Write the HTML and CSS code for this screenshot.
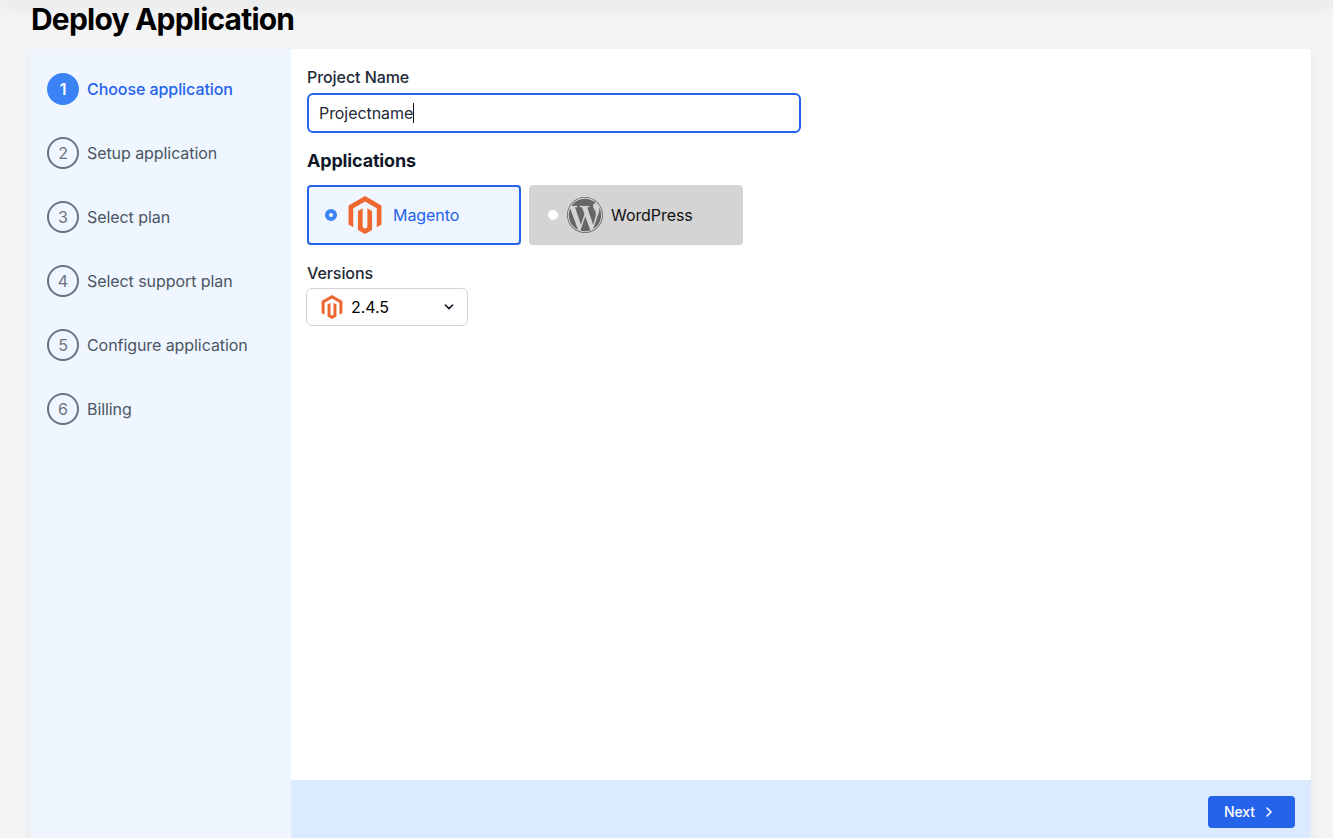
FILE: index.html
```html
<!DOCTYPE html>
<html lang="en">
<head>
<meta charset="utf-8">
<title>Deploy Application</title>
<link rel="stylesheet" href="styles.css">
</head>
<body>
<svg class="sprite" width="0" height="0" aria-hidden="true">
  <symbol id="magento" viewBox="0 0 24 24"><path d="M12 24l-4.455-2.572v-12l2.97-1.715v12.001l1.485.902 1.485-.902V7.713l2.97 1.715v12L12 24zM22.391 6v12l-2.969 1.714V7.713L12 3.43 4.574 7.713v12L1.609 18V6L12 0l10.391 6z"/></symbol>
  <symbol id="wordpress" viewBox="0 0 24 24"><path d="M21.469 6.825c.84 1.537 1.318 3.3 1.318 5.175 0 3.979-2.156 7.456-5.363 9.325l3.295-9.527c.615-1.54.82-2.771.82-3.864 0-.405-.026-.78-.07-1.11m-7.981.105c.647-.03 1.232-.105 1.232-.105.582-.075.514-.93-.067-.899 0 0-1.755.135-2.88.135-1.064 0-2.85-.15-2.85-.15-.585-.03-.661.855-.075.885 0 0 .54.061 1.125.09l1.68 4.605-2.37 7.08L5.354 6.9c.649-.03 1.234-.1 1.234-.1.585-.075.516-.93-.065-.896 0 0-1.746.138-2.874.138-.2 0-.438-.008-.69-.015C4.911 3.15 8.235 1.215 12 1.215c2.809 0 5.365 1.072 7.286 2.833-.046-.003-.091-.009-.141-.009-1.06 0-1.812.923-1.812 1.914 0 .89.513 1.643 1.06 2.531.411.72.89 1.643.89 2.977 0 .915-.354 1.994-.821 3.479l-1.075 3.585-3.9-11.61.001.014zM12 22.784c-1.059 0-2.081-.153-3.048-.437l3.237-9.406 3.315 9.087c.024.053.05.101.078.149-1.12.393-2.325.609-3.582.609M1.211 12c0-1.564.336-3.05.935-4.39L7.29 21.709C3.694 19.96 1.212 16.271 1.211 12M12 0C5.385 0 0 5.385 0 12s5.385 12 12 12 12-5.385 12-12S18.615 0 12 0m0 23.449C5.688 23.449.551 18.312.551 12 .551 5.688 5.688.551 12 .551 18.312.551 23.449 5.688 23.449 12c0 6.312-5.137 11.449-11.449 11.449"/></symbol>
</svg>
<div class="topbar"></div>
<main class="page">
  <h1 class="title">Deploy Application</h1>
  <div class="card">
    <nav class="steps">
      <div class="step active"><span class="num">1</span><span>Choose application</span></div>
      <div class="step"><span class="num">2</span><span>Setup application</span></div>
      <div class="step"><span class="num">3</span><span>Select plan</span></div>
      <div class="step"><span class="num">4</span><span>Select support plan</span></div>
      <div class="step"><span class="num">5</span><span>Configure application</span></div>
      <div class="step"><span class="num">6</span><span>Billing</span></div>
    </nav>
    <section class="content">
      <div class="form">
        <div class="label">Project Name</div>
        <div class="input"><span>Projectname</span><span class="caret"></span></div>
        <h2 class="heading">Applications</h2>
        <div class="apps">
          <div class="app selected">
            <span class="radio"></span>
            <svg class="logo magento"><use href="#magento"/></svg>
            <span>Magento</span>
          </div>
          <div class="app">
            <span class="radio"></span>
            <svg class="logo wp"><use href="#wordpress"/></svg>
            <span>WordPress</span>
          </div>
        </div>
        <div class="label versions">Versions</div>
        <div class="select">
          <svg class="small-logo"><use href="#magento"/></svg>
          <span class="value">2.4.5</span>
          <svg class="chevron" viewBox="0 0 20 20"><path d="M5.5 7.5 10 12l4.5-4.5" fill="none" stroke="currentColor" stroke-width="2" stroke-linecap="round" stroke-linejoin="round"/></svg>
        </div>
      </div>
      <footer class="footer">
        <div class="next">Next
          <svg class="next-icon" viewBox="0 0 20 20"><path d="M7.5 5 12.5 10l-5 5" fill="none" stroke="currentColor" stroke-width="2" stroke-linecap="round" stroke-linejoin="round"/></svg>
        </div>
      </footer>
    </section>
  </div>
</main>
</body>
</html>
```
FILE: styles.css
```css
* { box-sizing: border-box; }
html, body { margin: 0; height: 838px; overflow: hidden; }
body { background: #f3f4f6; font-family: Inter, "Liberation Sans", sans-serif; color: #111827; font-size: 16px; letter-spacing: -.07px; }
.sprite { display: block; height: 0; }
.topbar { height: 0; box-shadow: 0 0 20px 2px rgba(0, 0, 0, .2); }
.page { padding: 0 22px 0 31px; display: flex; flex-direction: column; height: 838px; }
.title { margin: 0; height: 49px; padding-top: 1px; font-size: 30px; line-height: 36px; font-weight: 700; color: #000; letter-spacing: -.8px; }
.card { flex: 1; display: flex; min-height: 0; border-radius: 4px 4px 0 0; background: #fff; box-shadow: 0 4px 12px rgba(0, 0, 0, .06); overflow: hidden; }
.steps { width: 260px; flex: none; background: #eff6ff; padding: 24px 16px; display: flex; flex-direction: column; gap: 32px; }
.step { display: flex; align-items: center; gap: 8px; height: 32px; color: #4b5563; line-height: 24px; }
.num { width: 32px; height: 32px; border-radius: 50%; border: 2px solid #6b7280; display: flex; align-items: center; justify-content: center; color: #6b7280; flex: none; }
.step.active { color: #2563eb; font-weight: 500; }
.step.active .num { background: #3b82f6; border-color: #3b82f6; color: #fff; font-weight: 600; }
.content { flex: 1; display: flex; flex-direction: column; min-width: 0; }
.form { flex: 1; padding: 16px; }
.label { font-size: 16px; line-height: 24px; font-weight: 500; margin-bottom: 4px; color: #1f2937; }
.input { width: 494px; height: 40px; border: 2px solid #2563eb; border-radius: 6px; padding: 0 10px; display: flex; align-items: center; color: #1f2937; }
.caret { width: 1px; height: 20px; background: #111; }
.heading { margin: 16px 0 12px; font-size: 18px; line-height: 24px; font-weight: 700; color: #111827; letter-spacing: -.17px; }
.apps { display: flex; gap: 8px; }
.app { width: 214px; height: 60px; border-radius: 4px; background: #d4d4d4; display: flex; align-items: center; padding: 0 19px; color: #111; }
.app.selected { background: #eff6ff; border: 2px solid #2563eb; padding: 0 16px; color: #2563eb; }
.radio { width: 10px; height: 10px; border-radius: 50%; background: #fff; flex: none; }
.selected .radio { width: 12px; height: 12px; background: #fff; border: 4px solid #3b82f6; }
.logo { flex: none; fill: currentColor; }
.magento { width: 38px; height: 38px; margin: 0 9px; fill: #ee672f; }
.wp { width: 36px; height: 36px; margin: 0 8px 0 9px; fill: #666; }
.versions { margin-top: 16px; margin-bottom: 3px; }
.select { width: 162px; height: 38px; margin-left: -1px; border: 1px solid #d1d5db; border-radius: 6px; display: flex; align-items: center; padding: 0 10px 0 13px; color: #000; }
.small-logo { width: 24px; height: 24px; fill: #ee672f; flex: none; }
.value { margin-left: 7px; flex: 1; }
.chevron { width: 16px; height: 16px; color: #111827; flex: none; }
.footer { height: 58px; flex: none; background: #dbeafe; padding: 16px; display: flex; justify-content: flex-end; }
.next { width: 87px; height: 32px; padding: 0 2px 1px 0; background: #2563eb; color: #fff; border-radius: 4px; display: flex; align-items: center; justify-content: center; gap: 6px; font-size: 14px; font-weight: 500; }
.next-icon { width: 16px; height: 16px; }
```
